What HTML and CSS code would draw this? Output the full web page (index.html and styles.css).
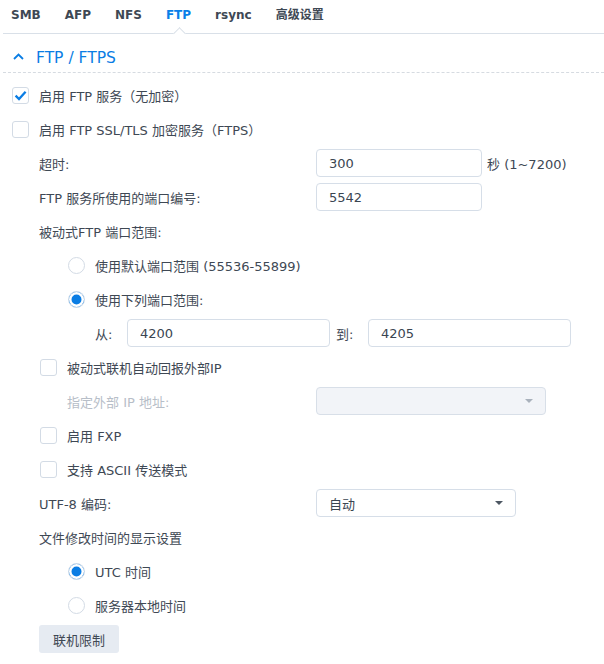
FILE: index.html
```html
<!DOCTYPE html>
<html lang="zh-CN">
<head>
<meta charset="utf-8">
<title>FTP</title>
<link rel="stylesheet" href="styles.css">
</head>
<body>
<div class="page">
  <nav class="tabs">
    <span class="tab">SMB</span>
    <span class="tab">AFP</span>
    <span class="tab">NFS</span>
    <span class="tab active">FTP</span>
    <span class="tab">rsync</span>
    <span class="tab">高级设置</span>
  </nav>

  <div class="section-head">
    <svg class="chev" width="11" height="7" viewBox="0 0 11 7"><path d="M1 6 L5.5 1.5 L10 6" fill="none" stroke="#0a7de4" stroke-width="1.8"/></svg>
    <span>FTP / FTPS</span>
  </div>

  <div class="form">
    <div class="row">
      <span class="cb checked"><svg width="15" height="15" viewBox="0 0 15 15"><path d="M2.6 7.6 L6 11 L12.6 3.8" fill="none" stroke="#0a7de4" stroke-width="2.3"/></svg></span>
      <span class="txt">启用 FTP 服务（无加密）</span>
    </div>
    <div class="row">
      <span class="cb"></span>
      <span class="txt">启用 FTP SSL/TLS 加密服务（FTPS）</span>
    </div>
    <div class="row ind1">
      <span class="label">超时:</span>
      <span class="input w166">300</span>
      <span class="unit">秒 (1~7200)</span>
    </div>
    <div class="row ind1">
      <span class="label">FTP 服务所使用的端口编号:</span>
      <span class="input w166">5542</span>
    </div>
    <div class="row ind1">
      <span class="txt">被动式FTP 端口范围:</span>
    </div>
    <div class="row ind2">
      <span class="radio"></span>
      <span class="txt">使用默认端口范围 (55536-55899)</span>
    </div>
    <div class="row ind2">
      <span class="radio on"></span>
      <span class="txt">使用下列端口范围:</span>
    </div>
    <div class="row ind3">
      <span class="pre">从:</span>
      <span class="input w203">4200</span>
      <span class="pre mid">到:</span>
      <span class="input w203">4205</span>
    </div>
    <div class="row ind1b">
      <span class="cb"></span>
      <span class="txt">被动式联机自动回报外部IP</span>
    </div>
    <div class="row ind1c">
      <span class="label disabled">指定外部 IP 地址:</span>
      <span class="select disabled w230"><span></span><i class="arrow"></i></span>
    </div>
    <div class="row ind1b">
      <span class="cb"></span>
      <span class="txt">启用 FXP</span>
    </div>
    <div class="row ind1b">
      <span class="cb"></span>
      <span class="txt">支持 ASCII 传送模式</span>
    </div>
    <div class="row ind1">
      <span class="label">UTF-8 编码:</span>
      <span class="select w200"><span>自动</span><i class="arrow"></i></span>
    </div>
    <div class="row ind1">
      <span class="txt">文件修改时间的显示设置</span>
    </div>
    <div class="row ind2">
      <span class="radio on"></span>
      <span class="txt">UTC 时间</span>
    </div>
    <div class="row ind2">
      <span class="radio"></span>
      <span class="txt">服务器本地时间</span>
    </div>
    <div class="row ind1">
      <span class="btn">联机限制</span>
    </div>
  </div>
</div>
</body>
</html>
```

FILE: styles.css
```css
* { box-sizing: border-box; }
html, body { margin: 0; padding: 0; background: #fff; }
body {
  font-family: "DejaVu Sans", "Noto Sans CJK SC", sans-serif;
  font-size: 13px;
  color: #3e4854;
}
.page { padding-left: 3px; width: 604px; }

.tabs {
  display: flex;
  gap: 24px;
  height: 34px;
  padding-left: 8px;
  border-bottom: 1px solid #d9e0e8;
}
.tab {
  position: relative;
  height: 30px;
  line-height: 30px;
  font-size: 12px;
  font-weight: bold;
  color: #3e4854;
}
.tab.active { color: #0a7fe8; }
.tab.active::after {
  content: "";
  position: absolute;
  left: 50%;
  bottom: -8px;
  width: 8px;
  height: 8px;
  margin-left: -4px;
  background: #fff;
  border-top: 1px solid #d9e0e8;
  border-left: 1px solid #d9e0e8;
  transform: rotate(45deg);
}

.section-head {
  display: flex;
  align-items: center;
  height: 39px;
  padding-top: 9px;
  padding-left: 10px;
  border-bottom: 1px dashed #d6dbe1;
  color: #0a7de4;
  font-size: 15.5px;
}
.chev { margin-right: 12px; margin-top: -2px; }

.form { padding-top: 5px; }
.row {
  display: flex;
  align-items: center;
  height: 34px;
  padding-left: 9px;
  white-space: nowrap;
}
.row.ind1 { padding-left: 36px; }
.row.ind1b { padding-left: 37px; }
.row.ind1c { padding-left: 64px; }
.row.ind2 { padding-left: 65px; }
.row.ind3 { padding-left: 92px; }

.cb {
  display: inline-flex;
  align-items: center;
  justify-content: center;
  width: 17px;
  height: 17px;
  border: 1px solid #d3dbe5;
  border-radius: 3px;
  margin-right: 10px;
  background: #fff;
}
.radio {
  width: 17px;
  height: 17px;
  border: 1px solid #d3dbe5;
  border-radius: 50%;
  margin-right: 10px;
  background: #fff;
}
.radio.on {
  background: #0a7de4;
  box-shadow: inset 0 0 0 2.5px #fff;
  border-color: #dbe2ea;
}

.label { width: 277px; }
.ind1c .label { width: 249px; }
.label.disabled { color: #b7bec8; }

.input, .select {
  display: inline-flex;
  align-items: center;
  height: 28px;
  border: 1px solid #d6dee8;
  border-radius: 4px;
  padding-left: 12px;
  color: #3a4551;
  background: #fff;
}
.w166 { width: 166px; }
.w203 { width: 203px; }
.w200 { width: 200px; }
.w230 { width: 230px; }
.unit { margin-left: 5px; }

.pre { width: 32px; }
.pre.mid { margin-left: 6px; }

.select { justify-content: space-between; padding-right: 12px; }
.select.disabled { background: #f2f4f8; border-color: #d8dfe8; }
.arrow {
  width: 0;
  height: 0;
  border-left: 4.5px solid transparent;
  border-right: 4.5px solid transparent;
  border-top: 4.5px solid #4d5763;
}
.select.disabled .arrow { border-top-color: #a9b1bc; }

.btn {
  display: inline-flex;
  align-items: center;
  justify-content: center;
  width: 80px;
  height: 28px;
  border-radius: 3px;
  background: #e6ebf2;
  color: #3e4854;
}
```
